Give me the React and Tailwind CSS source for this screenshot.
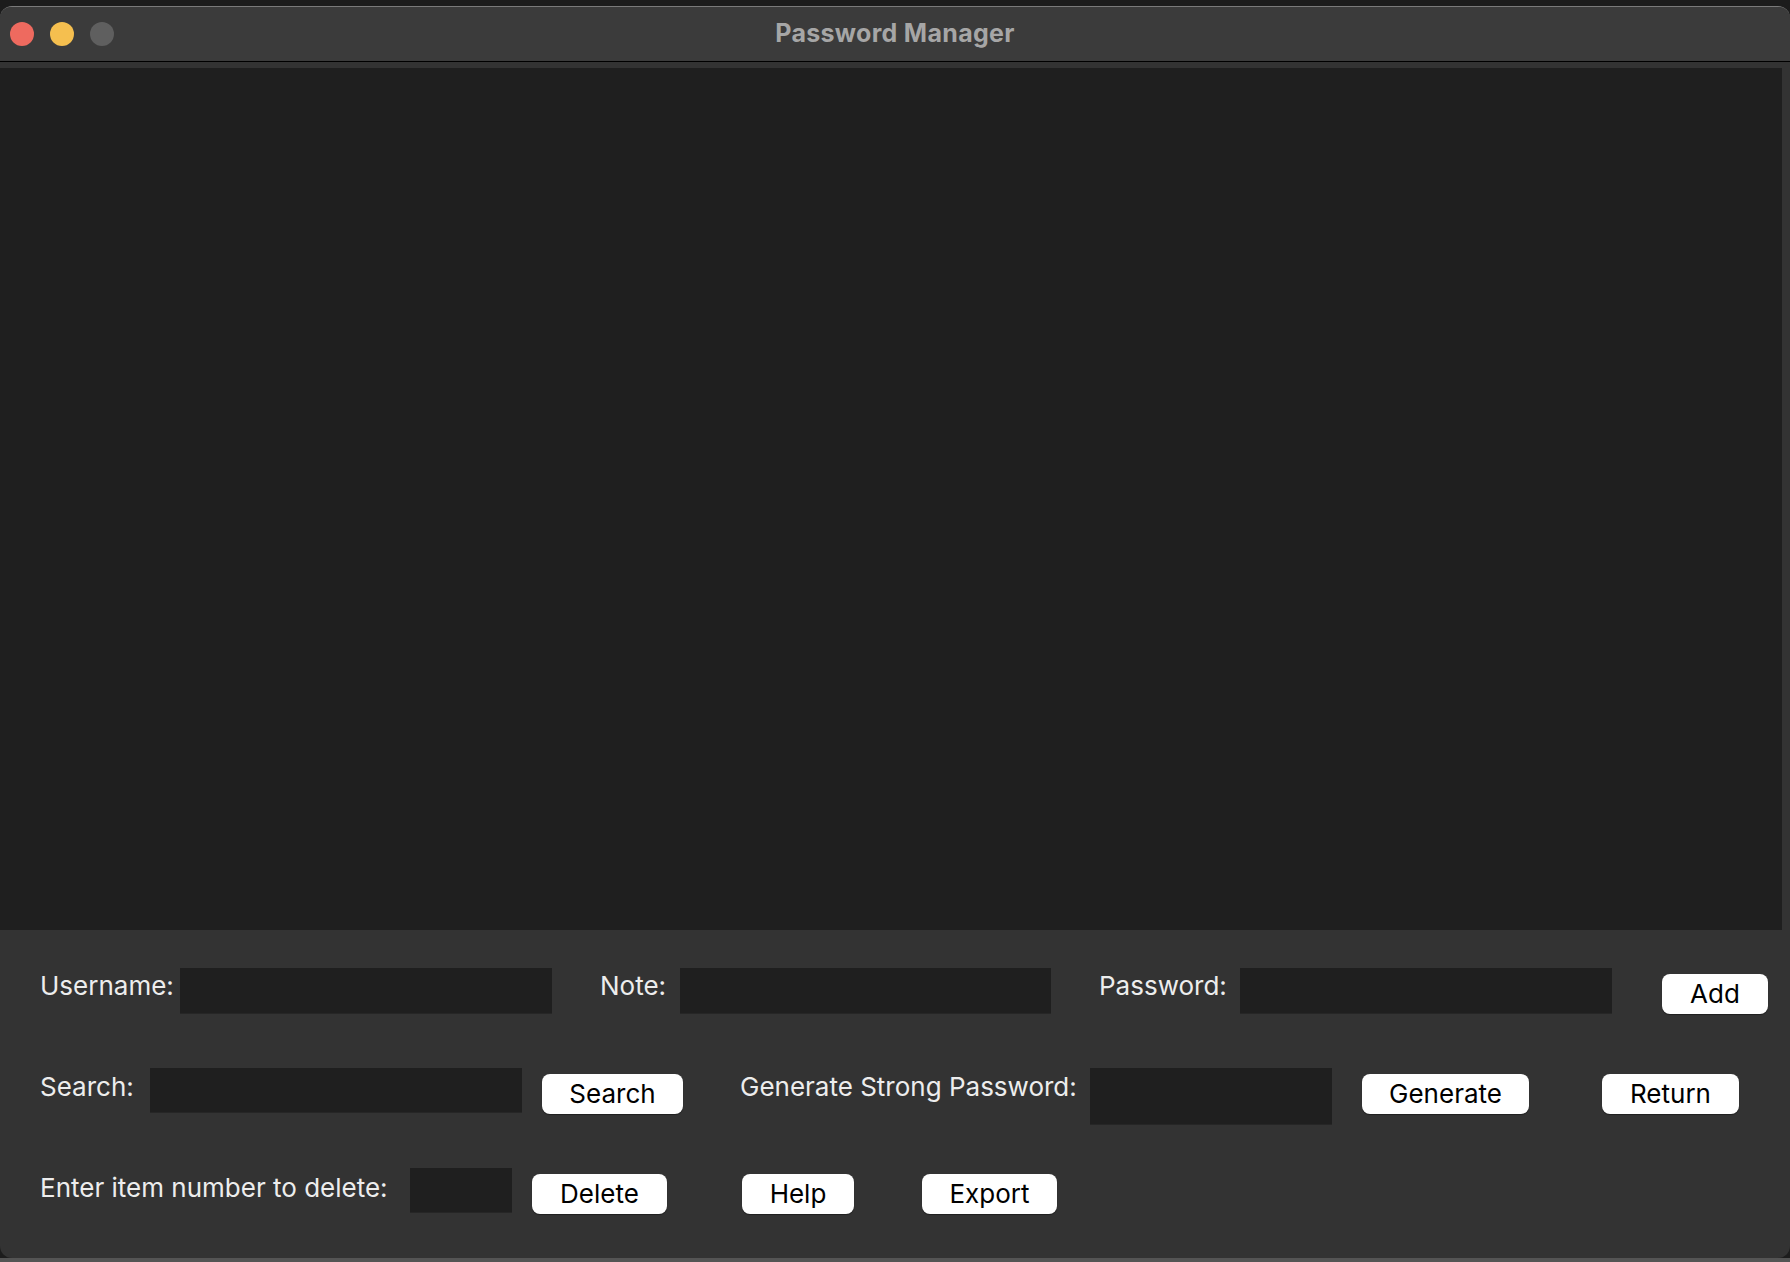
const font = { fontFamily: 'Inter, "Noto Sans", sans-serif' };

function Label({ children, w }) {
  return (
    <div className={`${w} shrink-0 mt-[3px] text-[26px] leading-[30px] text-[#ededed] whitespace-nowrap`}>
      {children}
    </div>
  );
}

function Entry({ w, h = 'h-[45px]' }) {
  return <div className={`${w} ${h} shrink-0 bg-[#1f1f1f] shadow-[0_1px_0_rgba(0,0,0,0.25)]`} />;
}

function Btn({ children, w, ml }) {
  return (
    <button
      className={`${w} ${ml} shrink-0 mt-[6px] h-[40px] rounded-[8px] bg-white text-black text-[26px] leading-[40px] text-center shadow-[0_1px_1px_rgba(0,0,0,0.4)]`}
    >
      {children}
    </button>
  );
}

export default function App() {
  return (
    <div className="w-[1790px] h-[1262px] bg-[#1c1c1c] flex flex-col overflow-hidden" style={font}>
      <div className="h-[6px] shrink-0" />

      {/* window */}
      <div className="h-[1252px] shrink-0 flex flex-col bg-[#333333] rounded-[12px] border-t border-[#7a7a7a] overflow-hidden">
        {/* title bar */}
        <div className="h-[55px] shrink-0 grid grid-cols-[1fr_auto_1fr] items-center bg-[#3b3b3b] border-b border-black">
          <div className="flex items-center gap-[16px] pl-[10px]">
            <span className="w-[24px] h-[24px] rounded-full bg-[#ee6a5f]" />
            <span className="w-[24px] h-[24px] rounded-full bg-[#f5bf4f]" />
            <span className="w-[24px] h-[24px] rounded-full bg-[#5f5f5f]" />
          </div>
          <div className="text-[25px] font-bold text-[#a6a6a6] tracking-[0.3px]">Password Manager</div>
          <div />
        </div>

        {/* list area */}
        <div className="pt-[6px] pr-[8px]">
          <div className="h-[862px] bg-[#1f1f1f]" />
        </div>

        {/* form */}
        <div className="flex flex-col pt-[38px] pl-[40px]">
          <div className="h-[100px] flex items-start">
            <Label w="w-[140px]">Username:</Label>
            <Entry w="w-[372px]" />
            <div className="w-[48px] shrink-0" />
            <Label w="w-[80px]">Note:</Label>
            <Entry w="w-[371px]" />
            <div className="w-[48px] shrink-0" />
            <Label w="w-[141px]">Password:</Label>
            <Entry w="w-[372px]" />
            <Btn w="w-[106px]" ml="ml-[50px]">Add</Btn>
          </div>

          <div className="h-[100px] flex items-start">
            <div className="w-[110px] shrink-0 mt-[4px] text-[26px] leading-[30px] text-[#ededed]">Search:</div>
            <Entry w="w-[372px]" h="h-[44px]" />
            <Btn w="w-[141px]" ml="ml-[20px]">Search</Btn>
            <div className="w-[57px] shrink-0" />
            <div className="w-[350px] shrink-0 mt-[4px] text-[26px] leading-[30px] text-[#ededed] whitespace-nowrap">
              Generate Strong Password:
            </div>
            <Entry w="w-[242px]" h="h-[56px]" />
            <Btn w="w-[167px]" ml="ml-[30px]">Generate</Btn>
            <Btn w="w-[137px]" ml="ml-[73px]">Return</Btn>
          </div>

          <div className="h-[100px] flex items-start">
            <div className="w-[370px] shrink-0 mt-[5px] text-[26px] leading-[30px] text-[#ededed] whitespace-nowrap">
              Enter item number to delete:
            </div>
            <Entry w="w-[102px]" h="h-[44px]" />
            <Btn w="w-[135px]" ml="ml-[20px]">Delete</Btn>
            <Btn w="w-[112px]" ml="ml-[75px]">Help</Btn>
            <Btn w="w-[135px]" ml="ml-[68px]">Export</Btn>
          </div>
        </div>
      </div>

      <div className="flex-1 bg-[#545454]" />
    </div>
  );
}
